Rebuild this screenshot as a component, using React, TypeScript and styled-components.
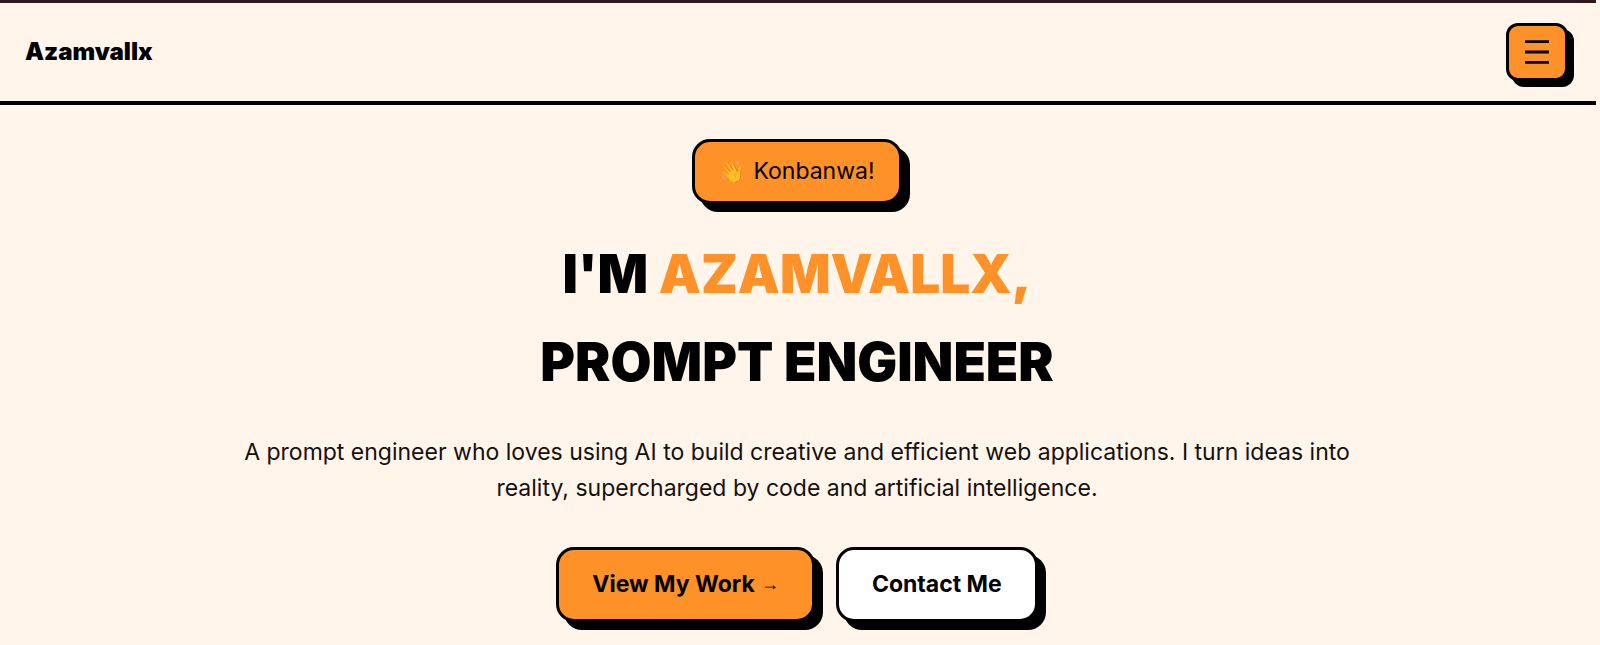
import React from "react";
import styled, { createGlobalStyle } from "styled-components";

const ink = "#000000";
const orange = "#ff9129";
const cream = "#fff5eb";

const GlobalStyle = createGlobalStyle`
  *, *::before, *::after { box-sizing: border-box; }
  body {
    margin: 0;
    background: ${cream};
    color: ${ink};
    font-family: Inter, "Open Sans", sans-serif;
    font-size: 23px;
    overflow-x: hidden;
  }
`;

const Page = styled.div`
  padding-right: 4px;
`;

const Header = styled.header`
  display: flex;
  align-items: center;
  justify-content: space-between;
  padding: 20px 28px 20px 25px;
  border-top: 3px solid #2f171b;
  border-bottom: 4px solid ${ink};
`;

const Logo = styled.a`
  color: ${ink};
  font-size: 24px;
  font-weight: 900;
  line-height: 36px;
  text-decoration: none;
`;

const MenuButton = styled.button`
  display: grid;
  place-items: center;
  width: 62px;
  height: 58px;
  padding: 0;
  border: 3px solid ${ink};
  border-radius: 12px;
  background: ${orange};
  color: ${ink};
  box-shadow: 6px 6px 0 ${ink};
  cursor: pointer;
`;

const Hero = styled.main`
  display: flex;
  flex-direction: column;
  align-items: center;
  padding: 34px 24px 16px 22px;
  text-align: center;
`;

const Badge = styled.p`
  display: flex;
  align-items: center;
  gap: 8px;
  margin: 0;
  padding: 12px 24px;
  border: 3px solid ${ink};
  border-radius: 18px;
  background: ${orange};
  box-shadow: 8px 8px 0 ${ink};
  line-height: 35px;
`;

const Wave = styled.span`
  font-size: 21px;
  opacity: 0.8;
`;

const Title = styled.h1`
  margin: 26px 0 0;
  font-size: 53px;
  font-weight: 900;
  line-height: 88px;
`;

const TitleLine = styled.span`
  display: block;
`;

const Accent = styled.span`
  color: ${orange};
`;

const Intro = styled.p`
  max-width: 1140px;
  margin: 28px 0 0;
  color: #14100d;
  line-height: 36px;
`;

const Actions = styled.div`
  display: flex;
  flex-wrap: wrap;
  justify-content: center;
  gap: 21px;
  margin-top: 41px;
`;

const ActionLink = styled.a<{ $fill: string }>`
  display: flex;
  align-items: center;
  gap: 6px;
  padding: 17px 33px;
  border: 3px solid ${ink};
  border-radius: 18px;
  background: ${({ $fill }) => $fill};
  box-shadow: 8px 8px 0 ${ink};
  color: ${ink};
  font-weight: 700;
  line-height: 35px;
  text-decoration: none;
`;

const Arrow = styled.span`
  font-family: "Liberation Sans", sans-serif;
  font-size: 18px;
  font-weight: 400;
`;

export default function App() {
  return (
    <>
      <GlobalStyle />
      <Page>
        <Header>
          <Logo href="#home">Azamvallx</Logo>
          <MenuButton type="button" aria-label="Open menu">
            <svg width="26" height="26" viewBox="0 0 26 26" stroke="currentColor" strokeWidth="2.8" aria-hidden="true">
              <path d="M1 2.7H25M1 13H25M1 23.4H25" />
            </svg>
          </MenuButton>
        </Header>
        <Hero id="home">
          <Badge>
            <Wave>👋</Wave>
            Konbanwa!
          </Badge>
          <Title>
            <TitleLine>
              I'M <Accent>AZAMVALLX,</Accent>
            </TitleLine>
            <TitleLine>PROMPT ENGINEER</TitleLine>
          </Title>
          <Intro>
            A prompt engineer who loves using AI to build creative and efficient web applications. I turn ideas into
            reality, supercharged by code and artificial intelligence.
          </Intro>
          <Actions>
            <ActionLink href="#work" $fill={orange}>
              View My Work <Arrow>→</Arrow>
            </ActionLink>
            <ActionLink href="#contact" $fill="#ffffff">
              Contact Me
            </ActionLink>
          </Actions>
        </Hero>
      </Page>
    </>
  );
}
